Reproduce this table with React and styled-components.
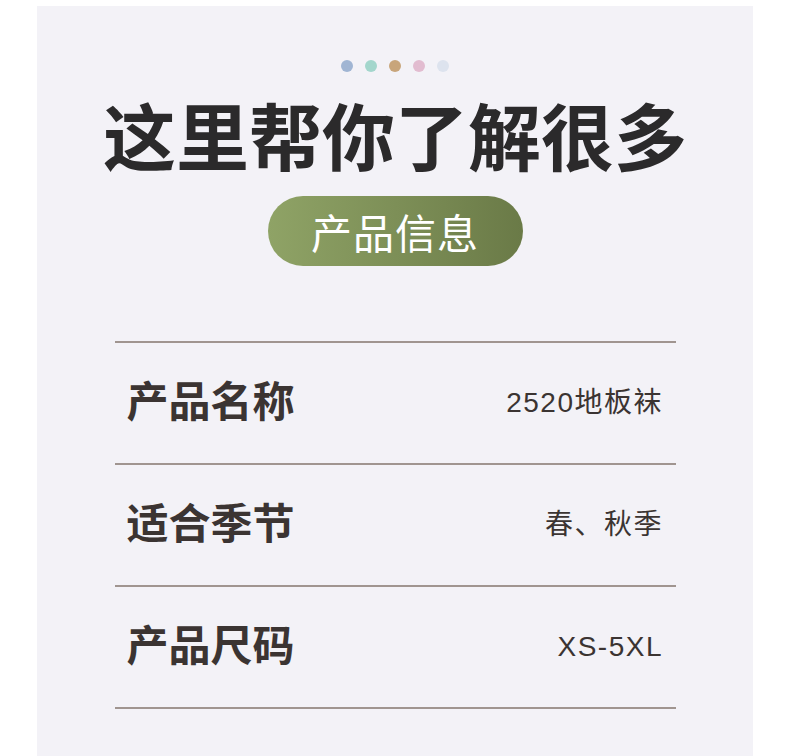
import React from 'react';
import styled, { createGlobalStyle } from 'styled-components';

const Global = createGlobalStyle`
	body {
		margin: 0;
		background: #fff;
		font-family: "Noto Sans CJK SC", "Noto Sans", sans-serif;
	}
`
const Panel = styled.div`
	margin: 6px 37px 0;
	width: 716px;
	min-height: 750px;
	background: #f3f2f7;
	display: flex;
	flex-direction: column;
	align-items: center;
	padding-top: 54px;
	box-sizing: border-box;
`
const Dots = styled.div`
	display: flex;
	gap: 12px;
`
const Dot = styled.span`
	width: 12px;
	height: 12px;
	border-radius: 50%;
	background: ${props => props.color};
`
const Title = styled.h1`
	margin: 21px 0 0;
	font-size: 73px;
	line-height: 80px;
	height: 80px;
	font-weight: 700;
	color: #2b2a2b;
`
const Pill = styled.div`
	margin-top: 23px;
	width: 255px;
	height: 70px;
	border-radius: 35px;
	background: linear-gradient(90deg, #8fa366 0%, #7d8f57 50%, #6a7a47 100%);
	color: #fff;
	font-size: 41px;
	font-weight: 400;
	display: flex;
	align-items: center;
	justify-content: center;
	letter-spacing: 1px;
`
const Table = styled.div`
	margin-top: 75px;
	width: 561px;
	border-top: 2px solid #a09590;
`
const Row = styled.div`
	height: 120px;
	border-bottom: 2px solid #a09590;
	display: flex;
	align-items: center;
	justify-content: space-between;
	padding: 0 14px 0 12px;
	color: #3b3432;
`
const Label = styled.div`
	font-size: 42px;
	font-weight: 700;
	line-height: 1;
	margin-bottom: 8px;
`
const Value = styled.div`
	font-family: "Liberation Sans", "Noto Sans CJK SC", sans-serif;
	font-size: 28px;
	font-weight: 400;
	line-height: 1;
	letter-spacing: 1.5px;
	margin-right: -1.5px;
`

const dots = ['#a0b5d3', '#a3d6cc', '#c8a57b', '#e2bcd0', '#dde3ee'];
const rows = [
	['产品名称', '2520地板袜'],
	['适合季节', '春、秋季'],
	['产品尺码', 'XS-5XL'],
];

export default function App() {
	return (
		<>
			<Global />
			<Panel>
				<Dots>
					{dots.map(c => <Dot key={c} color={c} />)}
				</Dots>
				<Title>这里帮你了解很多</Title>
				<Pill>产品信息</Pill>
				<Table>
					{rows.map(([k, v]) => (
						<Row key={k}>
							<Label>{k}</Label>
							<Value>{v}</Value>
						</Row>
					))}
				</Table>
			</Panel>
		</>
	);
}
